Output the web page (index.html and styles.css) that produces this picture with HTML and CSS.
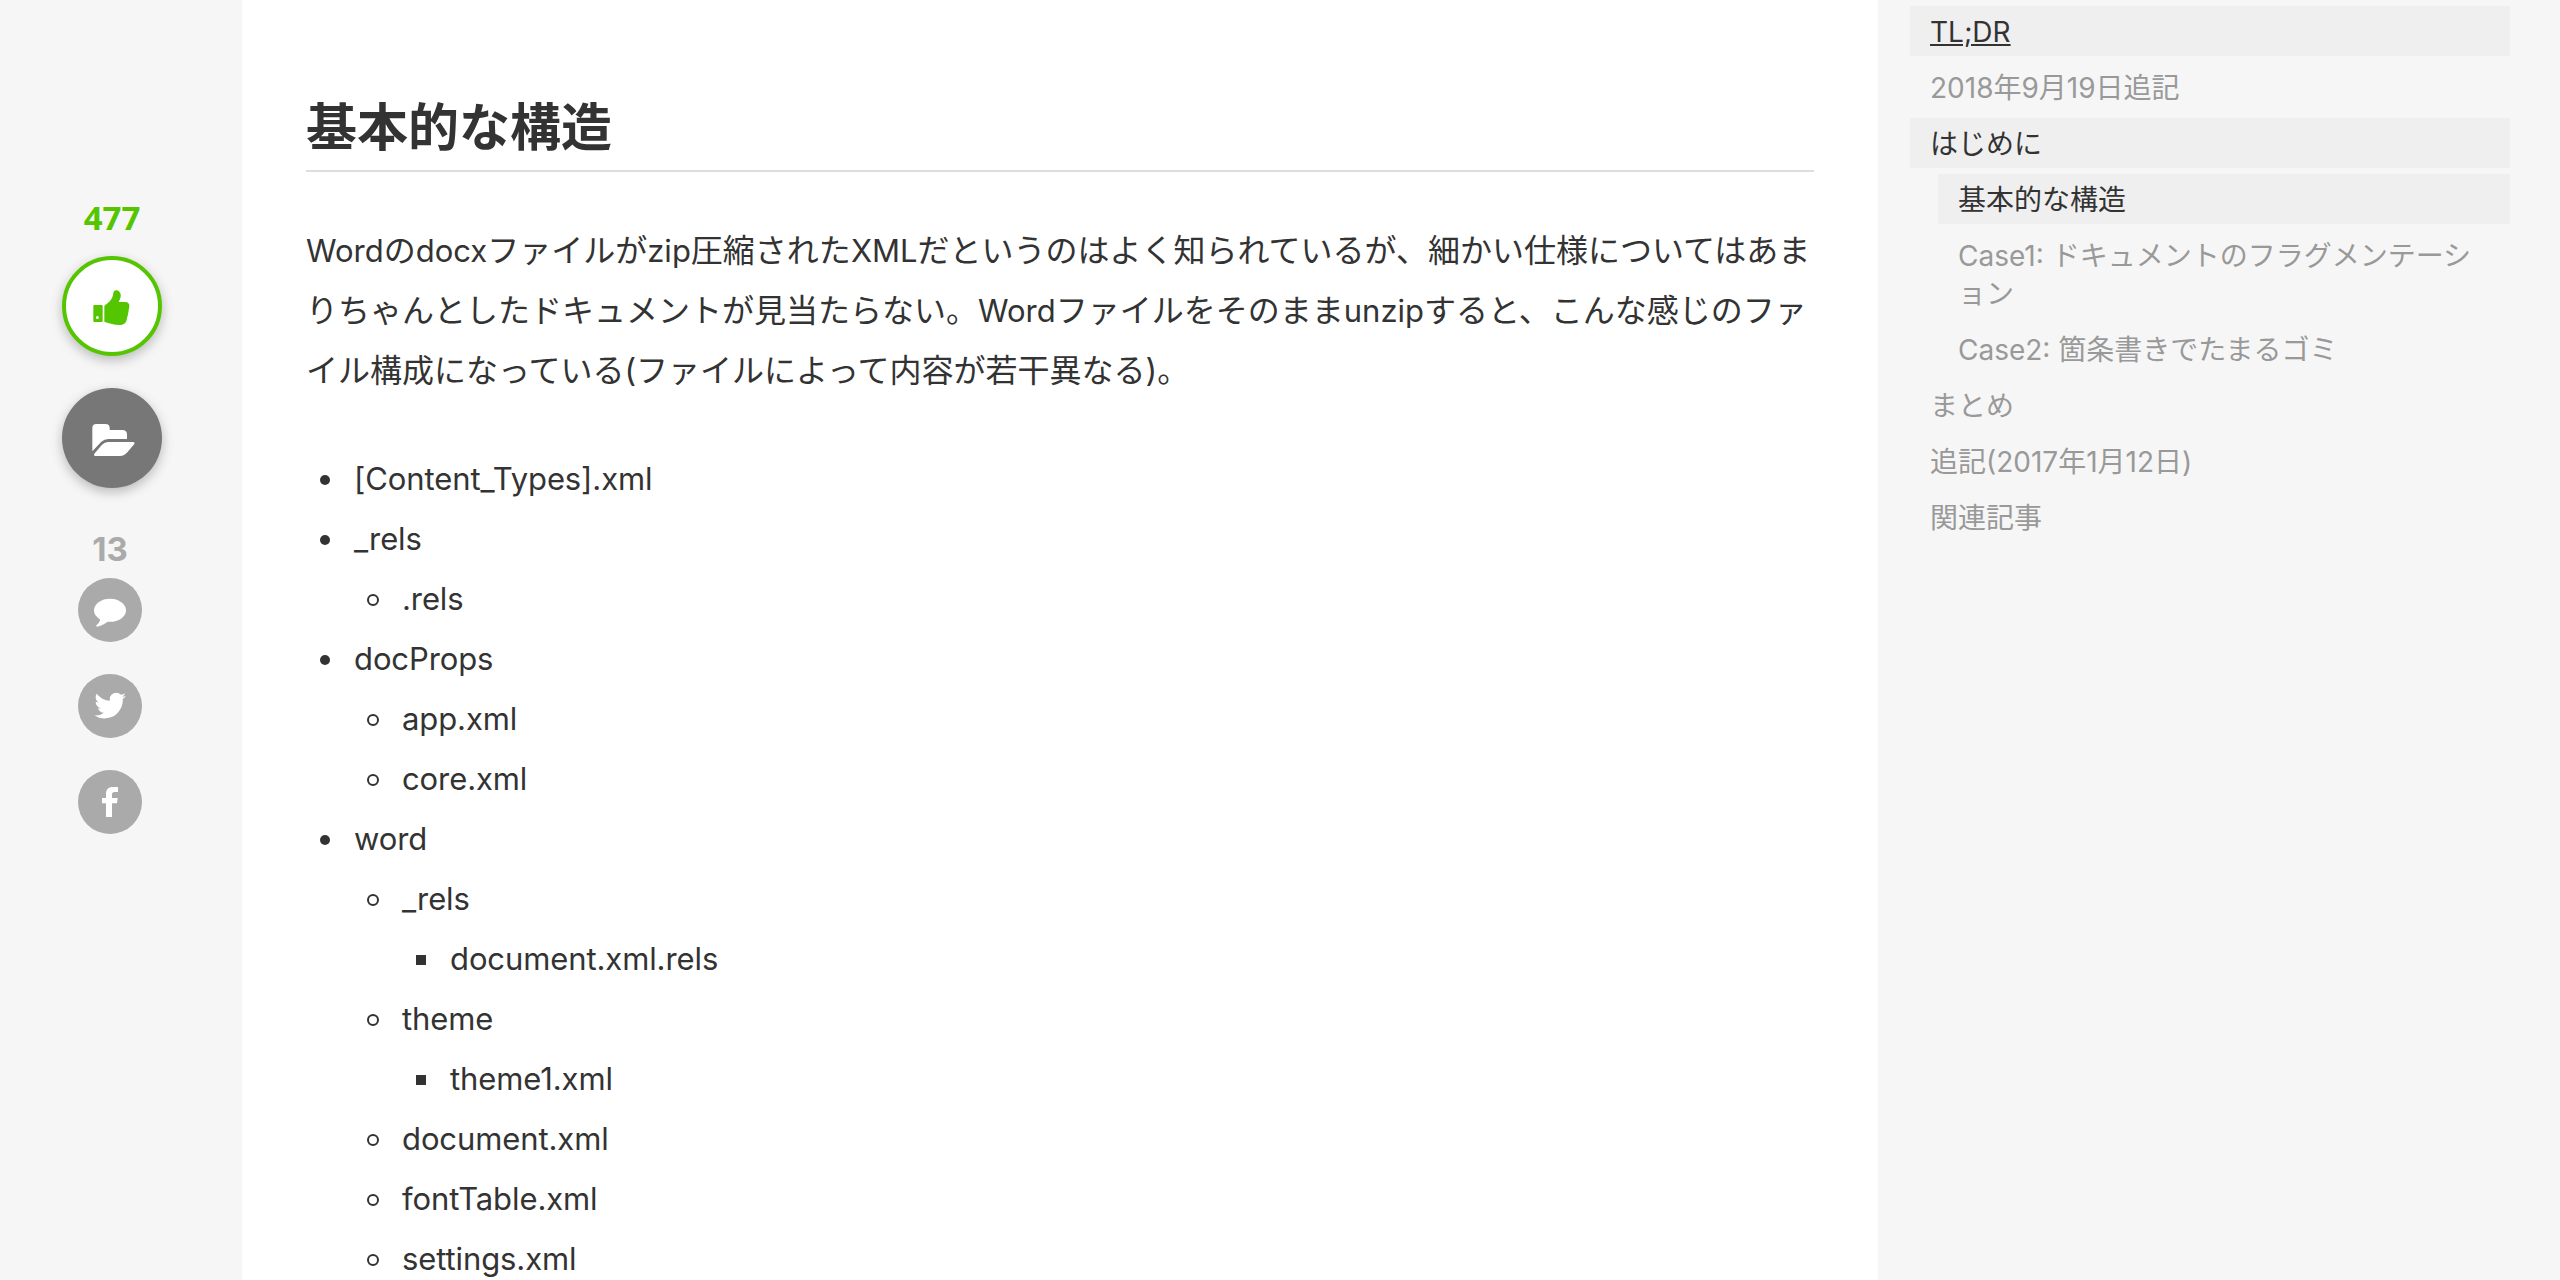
FILE: index.html
```html
<!DOCTYPE html>
<html lang="ja">

<head>
    <meta charset="utf-8">
    <meta name="viewport" content="width=device-width, initial-scale=1.0">
    <title>基本的な構造</title>
    <link rel="stylesheet" href="styles.css">
</head>

<body>
    <div class="page">
        <!-- share buttons -->
        <aside class="actions">
            <span class="like-count">477</span>
            <button class="btn-large like">
                <svg viewBox="0 0 276 276">
                    <path fill-rule="evenodd" d="M85 135H107Q110 135 110 138V183Q110 186 107 186H85Q82 186 82 183V138Q82 135 85 135ZM94 168A4.500 4.500 0 1 0 94 177A4.500 4.500 0 1 0 94 168Z" />
                    <path d="M115 140Q115 136 119 134C128 128 136 120 139 112C142 105 141 98 144 94C148 89 156 91 160 95C166 101 165 110 162 117L158 126H178C186 126 191 131 190 139C190 143 189 146 188 150C188 155 187 158 186 162C186 167 184 169 183 174C182 188 175 195 160 195C145 195 131 190 115 185Z" />
                </svg>
            </button>
            <button class="btn-large stock">
                <svg viewBox="0 0 300 300">
                    <path d="M91 190V120Q91 108 103 108H131Q143 108 143 120V126H181Q195 126 195 140V153H139Q127 153 118 161Z" />
                    <path d="M97 197L120 170Q128 162 138 162H214Q220 163 217 168L196 193Q187 204 174 204H100Q94 203 97 197Z" />
                </svg>
            </button>
            <span class="comment-count">13</span>
            <a class="btn-small">
                <svg viewBox="0 0 192 192">
                    <ellipse cx="96" cy="97" rx="48" ry="34.500" />
                    <path d="M60 118L67 125Q64 135 55 142Q53 146 58 146Q77 142 91 129Z" />
                </svg>
            </a>
            <a class="btn-small">
                <svg viewBox="0 0 192 192">
                    <path transform="translate(42.500 40.600) scale(.0603)" d="M1684 408q-67 98-162 167 1 14 1 42 0 130-38 259.500t-115.500 248.500-184.500 210.500-258 146-323 54.500q-271 0-496-145 35 4 78 4 225 0 401-138-105-2-188-64.500t-114-159.500q33 5 61 5 43 0 85-11-112-23-185.500-111.500t-73.500-205.500v-4q68 38 146 41-66-44-105-115t-39-154q0-88 44-163 121 149 294.500 238.500t371.500 99.500q-8-38-8-74 0-134 94.500-228.500t228.500-94.500q140 0 236 102 109-21 205-78-37 115-142 178 93-10 186-50z" />
                </svg>
            </a>
            <a class="btn-small">
                <svg viewBox="0 0 192 192">
                    <path d="M84 141V100H72V84H84V73C84 58 91 51 105 51H120V66H110C104 66 102 69 102 74V84H119L117 100H102V141Z" />
                </svg>
            </a>
        </aside>

        <main class="article">
            <h2>基本的な構造</h2>
            <p><span class="en">Word</span>の<span class="en">docx</span>ファイルが<span class="en">zip</span>圧縮された<span class="en">XML</span>だというのはよく知られているが、細かい仕様についてはあまりちゃんとしたドキュメントが見当たらない。<span class="en">Word</span>ファイルをそのまま<span class="en">unzip</span>すると、こんな感じのファイル構成になっている(ファイルによって内容が若干異なる)。</p>
            <ul>
                <li>[Content_Types].xml</li>
                <li>_rels
                    <ul>
                        <li>.rels</li>
                    </ul>
                </li>
                <li>docProps
                    <ul>
                        <li>app.xml</li>
                        <li>core.xml</li>
                    </ul>
                </li>
                <li>word
                    <ul>
                        <li>_rels
                            <ul>
                                <li>document.xml.rels</li>
                            </ul>
                        </li>
                        <li>theme
                            <ul>
                                <li>theme1.xml</li>
                            </ul>
                        </li>
                        <li>document.xml</li>
                        <li>fontTable.xml</li>
                        <li>settings.xml</li>
                    </ul>
                </li>
            </ul>
        </main>

        <!-- table of contents -->
        <nav class="toc">
            <a class="active hover">TL;DR</a>
            <a>2018年9月19日追記</a>
            <a class="active">はじめに</a>
            <div class="toc-sub">
                <a class="active">基本的な構造</a>
                <a>Case1: ドキュメントのフラグメンテーション</a>
                <a>Case2: 箇条書きでたまるゴミ</a>
            </div>
            <a>まとめ</a>
            <a>追記(2017年1月12日)</a>
            <a>関連記事</a>
        </nav>
    </div>
</body>

</html>
```
FILE: styles.css
```css
*,
*::before {
    margin: 0;
    padding: 0;
    box-sizing: border-box;
}

body {
    font-family: Inter, "Noto Sans CJK JP", sans-serif;
    font-size: 32px;
    color: #333;
    background: #f6f6f6;
    overflow: hidden;
}

.page {
    display: flex;
    height: 1280px;
}

/* share buttons */
.actions {
    width: 242px;
    padding: 198px 0 0 62px;
    display: flex;
    flex-direction: column;
    align-items: flex-start;
}

.actions svg {
    display: block;
    width: 100%;
    height: 100%;
    fill: #fff;
}

.like-count,
.comment-count {
    font-size: 33px;
    font-weight: bold;
    line-height: 40px;
    text-align: center;
}

.like-count {
    width: 100px;
    margin-bottom: 18px;
    font-family: "Open Sans", sans-serif;
    color: #55c500;
}

.comment-count {
    width: 96px;
    margin: 9px 0 9px;
    color: #aaa;
}

.btn-large {
    width: 100px;
    height: 100px;
    margin-bottom: 32px;
    border: none;
    border-radius: 50%;
    background: #777;
    box-shadow: 0 4px 12px rgba(0, 0, 0, 0.25);
}

.btn-large.like {
    border: 4px solid #55c500;
    background: #fff;
}

.btn-large.like svg {
    fill: #55c500;
}

.btn-small {
    width: 64px;
    height: 64px;
    margin: 0 0 32px 16px;
    border-radius: 50%;
    background: #aaa;
}

/* article */
.article {
    width: 1636px;
    padding: 88px 64px 0;
    background: #fff;
    overflow: hidden;
}

.article h2 {
    height: 84px;
    margin-bottom: 49px;
    border-bottom: 2px solid #ddd;
    font-size: 51px;
    line-height: 80px;
}

.article p {
    margin-bottom: 48px;
    line-height: 60px;
}

.article .en {
    font-size: 31px;
}

.article ul {
    padding-left: 48px;
    font-size: 31px;
    line-height: 60px;
    letter-spacing: -0.1px;
    list-style: none;
}

/* list bullets: disc, circle, square */
.article li::before {
    content: "";
    display: inline-block;
    position: relative;
    top: -2px;
    width: 10px;
    height: 10px;
    margin: 0 24px 0 -34px;
    border-radius: 50%;
    background: #333;
    vertical-align: middle;
}

.article ul ul li::before {
    width: 12px;
    height: 12px;
    margin: 0 23px 0 -35px;
    border: 2px solid #333;
    background: none;
}

.article ul ul ul li::before {
    width: 10px;
    height: 10px;
    margin: 0 24px 0 -34px;
    border: none;
    border-radius: 0;
    background: #333;
}

/* table of contents */
.toc {
    width: 682px;
    padding: 6px 50px 0 32px;
    display: flex;
    flex-direction: column;
    gap: 6px;
    font-size: 28px;
    line-height: 38px;
}

.toc a {
    padding: 7px 20px 5px;
    color: #999;
}

.toc a.active {
    color: #333;
    background: #efefef;
}

.toc a.hover {
    text-decoration: underline;
}

.toc-sub {
    display: flex;
    flex-direction: column;
    gap: 6px;
    padding-left: 28px;
}
```
